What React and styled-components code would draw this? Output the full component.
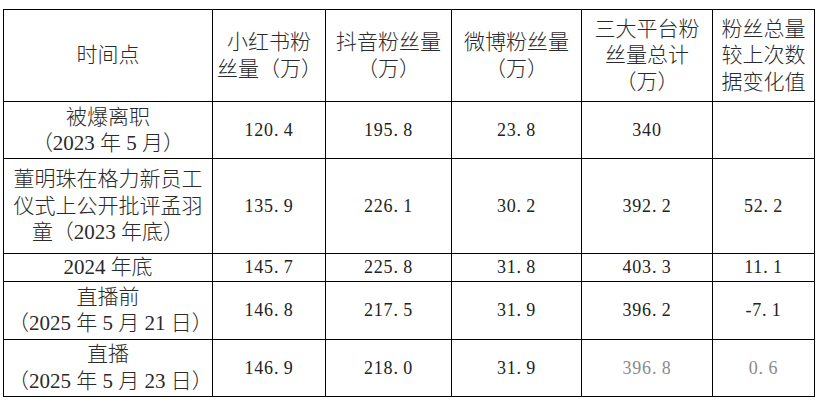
import React from 'react';
import styled, { createGlobalStyle } from 'styled-components';

const GlobalStyle = createGlobalStyle`
    html, body {
        margin: 0;
        padding: 0;
        background: #ffffff;
    }
`;

const COLUMNS = [209, 113, 126, 130, 131, 102];

const HEADERS = [
    '时间点',
    '小红书粉\n丝量（万）',
    '抖音粉丝量\n（万）',
    '微博粉丝量\n（万）',
    '三大平台粉\n丝量总计\n（万）',
    '粉丝总量\n较上次数\n据变化值'
];

const ROWS = [
    {
        label: '被爆离职\n（2023 年 5 月）',
        height: 57,
        values: ['120.4', '195.8', '23.8', '340', '']
    },
    {
        label: '董明珠在格力新员工\n仪式上公开批评孟羽\n童（2023 年底）',
        height: 95,
        values: ['135.9', '226.1', '30.2', '392.2', '52.2']
    },
    {
        label: '2024 年底',
        height: 27,
        values: ['145.7', '225.8', '31.8', '403.3', '11.1']
    },
    {
        label: '直播前\n（2025 年 5 月 21 日）',
        height: 58,
        values: ['146.8', '217.5', '31.9', '396.2', '-7.1']
    },
    {
        label: '直播\n（2025 年 5 月 23 日）',
        height: 57,
        values: ['146.9', '218.0', '31.9', '396.8', '0.6'],
        faded: [3, 4]
    }
];

// half-width cells like the song-ti digits: the point takes a full cell
const renderNumber = value => {
    const [whole, frac] = value.split('.');
    if (frac === undefined) {
        return whole;
    }
    return (
        <>
            {whole}
            <Dot>.</Dot>
            {frac}
        </>
    );
};

export default function App() {
    return (
        <Page>
            <GlobalStyle />
            <Table>
                <colgroup>
                    {COLUMNS.map((w, i) => (
                        <col key={i} style={{ width: w }} />
                    ))}
                </colgroup>
                <thead>
                    <Row height={92}>
                        {HEADERS.map((h, i) => (
                            <HeadCell key={i}>{h}</HeadCell>
                        ))}
                    </Row>
                </thead>
                <tbody>
                    {ROWS.map((row, r) => (
                        <Row key={r} height={row.height}>
                            <LabelCell>{row.label}</LabelCell>
                            {row.values.map((v, i) => (
                                <ValueCell
                                    key={i}
                                    faded={row.faded && row.faded.includes(i)}
                                >
                                    {renderNumber(v)}
                                </ValueCell>
                            ))}
                        </Row>
                    ))}
                </tbody>
            </Table>
        </Page>
    );
}

const Page = styled.div`
    padding: 9px 0 0 3px;
    width: 820px;
    height: 400px;
    box-sizing: border-box;
    overflow: hidden;
`;

const Table = styled.table`
    border-collapse: collapse;
    table-layout: fixed;
    width: 812px;
    color: #1c1c1c;
`;

const Row = styled.tr`
    height: ${props => props.height}px;
`;

const Cell = styled.td`
    border: 1px solid #000000;
    padding: 0 4px;
    text-align: center;
    vertical-align: middle;
    white-space: pre-line;
    box-sizing: border-box;
`;

const HeadCell = styled(Cell).attrs({ as: 'th' })`
    font-weight: 300;
    font-family: 'Liberation Serif', 'Noto Sans CJK SC', serif;
    font-size: 21px;
    line-height: 26.5px;
    color: #2a2a2a;
`;

const LabelCell = styled(Cell)`
    font-weight: 300;
    font-family: 'Liberation Serif', 'Noto Sans CJK SC', serif;
    font-size: 21px;
    line-height: 26.5px;
    color: #2a2a2a;
`;

const ValueCell = styled(Cell)`
    font-family: 'Liberation Serif', serif;
    font-size: 18px;
    letter-spacing: 0.8px;
    line-height: 26px;
    color: ${props => (props.faded ? '#8a8a8a' : '#222222')};
`;

const Dot = styled.span`
    display: inline-block;
    width: 9.8px;
    text-align: left;
`;
